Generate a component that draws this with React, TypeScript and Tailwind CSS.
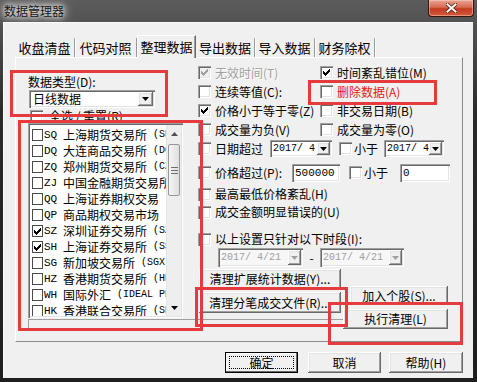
import React from 'react';

const sunken =
  'shadow-[inset_1px_1px_0_#a0a0a0,inset_2px_2px_0_#696969,inset_-1px_-1px_0_#ffffff,inset_-2px_-2px_0_#e3e3e3]';
const raised =
  'shadow-[inset_-1px_-1px_0_#696969,inset_1px_1px_0_#ffffff,inset_-2px_-2px_0_#a0a0a0,inset_2px_2px_0_#e3e3e3]';

// classic 7x7 pixel check mark
function Tick({ color = '#000' }: { color?: string }) {
  return (
    <svg width="7" height="7" viewBox="0 0 7 7" shapeRendering="crispEdges">
      {[2, 3, 4, 3, 2, 1, 0].map((y, x) => (
        <rect key={x} x={x} y={y} width="1" height="3" fill={color} />
      ))}
    </svg>
  );
}

function Check({ on = false, disabled = false }: { on?: boolean; disabled?: boolean }) {
  return (
    <span
      className={`w-[13px] h-[13px] shrink-0 flex items-center justify-center ${
        disabled ? 'bg-[#f0f0f0]' : 'bg-white'
      } ${sunken}`}
    >
      {on && <Tick color={disabled ? '#a0a0a0' : '#000'} />}
    </span>
  );
}

function Arrow({ disabled = false }: { disabled?: boolean }) {
  return (
    <svg width="7" height="4" viewBox="0 0 7 4">
      <path d="M0 0H7L3.5 4Z" fill={disabled ? '#a0a0a0' : '#000'} />
    </svg>
  );
}

function DropBtn({ disabled = false, narrow = false }: { disabled?: boolean; narrow?: boolean }) {
  return (
    <span
      className={`${narrow ? 'w-[13px]' : 'w-[15px]'} self-stretch shrink-0 flex items-center justify-center bg-[#f0f0f0] ${raised}`}
    >
      <Arrow disabled={disabled} />
    </span>
  );
}

function Combo({ text, w, disabled = false, mono = false }: { text: string; w: string; disabled?: boolean; mono?: boolean }) {
  return (
    <div className={`${w} h-full flex p-[2px] ${disabled ? 'bg-[#f7f7f7] text-[#a0a0a0]' : 'bg-white'} ${sunken}`}>
      <span
        className={`flex-1 flex items-center whitespace-pre ${
          mono ? "pl-[1px] font-['Liberation_Mono',monospace] text-[10px]" : 'pl-[2px]'
        }`}
      >
        {text}
      </span>
      <DropBtn disabled={disabled} narrow={mono} />
    </div>
  );
}

function Opt({ on = false, disabled = false, red = false, children }: { on?: boolean; disabled?: boolean; red?: boolean; children: React.ReactNode }) {
  return (
    <div className="flex items-center whitespace-nowrap">
      <Check on={on} disabled={disabled} />
      <span
        className={`ml-[4px] ${
          disabled ? 'text-[#a0a0a0] [text-shadow:1px_1px_0_#ffffff]' : red ? 'text-[#e01818]' : 'text-black'
        }`}
      >
        {children}
      </span>
    </div>
  );
}

function Btn({ children, className = '' }: { children: React.ReactNode; className?: string }) {
  return (
    <div className={`flex items-center justify-center bg-[#f0f0f0] whitespace-nowrap ${raised} ${className}`}>
      {children}
    </div>
  );
}

const markets = [
  { code: 'SQ', name: '上海期货交易所', tail: ' (SHFE)' },
  { code: 'DQ', name: '大连商品交易所', tail: ' (DCE)' },
  { code: 'ZQ', name: '郑州期货交易所', tail: ' (CZCE)' },
  { code: 'ZJ', name: '中国金融期货交易所', tail: ' (CFFEX)' },
  { code: 'QQ', name: '上海证券期权交易', tail: ' (SSE)' },
  { code: 'QP', name: '商品期权交易市场', tail: '' },
  { code: 'SZ', name: '深圳证券交易所', tail: ' (SZSE)', on: true },
  { code: 'SH', name: '上海证券交易所', tail: ' (SSE)', on: true },
  { code: 'SG', name: '新加坡交易所', tail: ' (SGX)' },
  { code: 'HZ', name: '香港期货交易所', tail: ' (HKFE)' },
  { code: 'WH', name: '国际外汇', tail: ' (IDEAL PRO)' },
  { code: 'HK', name: '香港联合交易所', tail: ' (SEHK)' },
];

const tabs = ['收盘清盘', '代码对照', '整理数据', '导出数据', '导入数据', '财务除权'];
const tabWidths = ['w-[60px]', 'w-[62px]', 'w-[59px]', 'w-[59px]', 'w-[60px]', 'w-[60px]'];

export default function App() {
  return (
    <div className="relative w-[477px] h-[382px] overflow-hidden flex flex-col bg-[linear-gradient(180deg,#5c5c5c_0%,#2a2a2a_30%,#1e1e1e_100%)] font-['Noto_Sans_CJK_SC',sans-serif] text-[12px] leading-[14px] text-black">
      {/* title bar */}
      <div className="h-[22px] shrink-0 flex justify-between items-start">
        <span className="pl-[4px] pt-[3px] text-[12px] leading-[15px] text-[#151515] [text-shadow:0_0_5px_#ffffff,0_0_9px_#ffffff,0_0_14px_#e0e0e0]">
          数据管理器
        </span>
        <div className="mr-[3px] w-[46px] h-[17px] rounded-b-[4px] border border-t-0 border-[#3d1209] bg-[linear-gradient(180deg,#e9a595_0%,#d86a52_45%,#c33a20_55%,#d45a3e_100%)] shadow-[inset_0_0_0_1px_rgba(255,220,210,0.45)] flex items-center justify-center">
          <svg width="11" height="10" viewBox="0 0 11 10">
            <path d="M1.5 1.5L9.5 8.5M9.5 1.5L1.5 8.5" stroke="#4a1a10" strokeWidth="3.6" strokeLinecap="square" />
            <path d="M1.5 1.5L9.5 8.5M9.5 1.5L1.5 8.5" stroke="#ffffff" strokeWidth="2" strokeLinecap="square" />
          </svg>
        </div>
      </div>

      {/* client area */}
      <div className="ml-[3px] mr-[4px] mb-[4px] flex-1 flex flex-col bg-[#f0f0f0] border-t border-l border-[#fbfbfb] pt-[12px]">
        {/* tab strip */}
        <div className="ml-[11px] h-[22px] flex items-end text-[13px] leading-[15px]">
          {tabs.map((t, i) =>
            i === 2 ? (
              <div
                key={t}
                className={`${tabWidths[i]} relative z-10 h-[23px] -mb-[1px] bg-[#f0f0f0] border-t border-l border-white border-r border-r-[#696969] shadow-[inset_-1px_0_0_#a0a0a0] flex justify-center pt-[3px]`}
              >
                {t}
              </div>
            ) : (
              <div
                key={t}
                className={`${tabWidths[i]} h-[19px] flex items-start justify-center pt-[2px] border-r border-[#9a9a9a] shadow-[1px_0_0_#ffffff]`}
              >
                {t}
              </div>
            )
          )}
        </div>

        {/* tab panel */}
        <div className="ml-[11px] w-[448px] h-[285px] shrink-0 border-t border-l border-white border-r border-b border-r-[#8a8a8a] border-b-[#8a8a8a] flex">
          {/* left column */}
          <div className="w-[182px] shrink-0 pl-[12px] pt-[17px] flex flex-col">
            <div className="h-[14px]">数据类型(D):</div>
            <div className="mt-[1px] ml-[1px] h-[18px]">
              <Combo text="日线数据" w="w-[126px]" />
            </div>
            <div className="mt-[1px] h-[14px] flex items-center pl-[2px]">
              <Check />
              <span className="ml-[6px]">全选 / 重置(R)</span>
            </div>
            <div className={`w-[155px] h-[195px] bg-white flex p-[2px] ${sunken}`}>
              <div className="flex-1 overflow-hidden pt-[2px] pl-[2px]">
                {markets.map((m) => (
                  <div key={m.code} className="h-[16px] flex items-center whitespace-nowrap">
                    <span className="w-[11px] h-[12px] shrink-0 border border-[#4a4a4a] bg-white flex items-center justify-center">
                      {m.on && <Tick />}
                    </span>
                    <span className="ml-[1px] w-[19px] shrink-0 font-['Liberation_Mono',monospace] text-[11px]">{m.code}</span>
                    <span>{m.name}</span>
                    <span className="font-['Liberation_Mono',monospace] text-[10px] whitespace-pre">{m.tail}</span>
                  </div>
                ))}
              </div>
              <div className="w-[15px] shrink-0 flex flex-col bg-[#eeeeee] border-l border-[#e4e4e4]">
                <div className="h-[17px] flex items-center justify-center">
                  <svg width="7" height="4" viewBox="0 0 7 4">
                    <path d="M0 4H7L3.5 0Z" fill="#505050" />
                  </svg>
                </div>
                <div className="flex-1 px-[1px]">
                  <div className="mt-[2px] h-[52px] rounded-[2px] border border-[#979797] bg-[linear-gradient(90deg,#f5f5f5,#dedede)] flex flex-col items-center justify-center gap-[2px]">
                    <span className="w-[7px] h-px bg-[#6e6e6e]" />
                    <span className="w-[7px] h-px bg-[#6e6e6e]" />
                    <span className="w-[7px] h-px bg-[#6e6e6e]" />
                  </div>
                </div>
                <div className="h-[17px] flex items-center justify-center">
                  <Arrow />
                </div>
              </div>
            </div>
            <div className="mt-[1px] w-[315px] h-[12px] shrink-0 border-t border-l border-[#a0a0a0]" />
          </div>

          {/* right column */}
          <div className="flex-1 pt-[5px] flex flex-col">
            <div className="h-[19px] flex items-center">
              <div className="w-[122px]">
                <Opt on disabled>无效时间(T)</Opt>
              </div>
              <Opt on>时间紊乱错位(M)</Opt>
            </div>
            <div className="h-[19px] flex items-center">
              <div className="w-[122px]">
                <Opt>连续等值(C):</Opt>
              </div>
              <Opt red>删除数据(A)</Opt>
            </div>
            <div className="h-[19px] flex items-center">
              <div className="w-[122px]">
                <Opt on>价格小于等于零(Z)</Opt>
              </div>
              <Opt>非交易日期(B)</Opt>
            </div>
            <div className="h-[19px] flex items-center">
              <div className="w-[122px]">
                <Opt>成交量为负(V)</Opt>
              </div>
              <Opt>成交量为零(O)</Opt>
            </div>
            <div className="h-[19px] flex items-center">
              <Check />
              <span className="ml-[4px] w-[55px]">日期超过</span>
              <div className="h-[17px]">
                <Combo text="2017/ 4" w="w-[62px]" mono />
              </div>
              <div className="ml-[7px]">
                <Check />
              </div>
              <span className="ml-[2px] w-[30px]">小于</span>
              <div className="h-[17px]">
                <Combo text="2017/ 4" w="w-[60px]" mono />
              </div>
            </div>
            <div className="mt-[5px] h-[19px] flex items-center">
              <Check />
              <span className="ml-[4px] w-[77px]">价格超过(P):</span>
              <div className={`w-[48px] h-[18px] bg-white pl-[3px] flex items-center font-['Liberation_Mono',monospace] text-[11px] ${sunken}`}>
                500000
              </div>
              <div className="ml-[9px]">
                <Check />
              </div>
              <span className="ml-[2px] w-[36px]">小于</span>
              <div className={`w-[50px] h-[18px] bg-white pl-[3px] flex items-center font-['Liberation_Mono',monospace] text-[11px] ${sunken}`}>
                0
              </div>
            </div>
            <div className="mt-[3px] h-[18px] flex items-center">
              <Opt>最高最低价格紊乱(H)</Opt>
            </div>
            <div className="h-[18px] flex items-center">
              <Opt>成交金额明显错误的(U)</Opt>
            </div>
            <div className="mt-[9px] h-[18px] flex items-center">
              <Opt>以上设置只针对以下时段(I):</Opt>
            </div>
            <div className="h-[19px] pl-[20px] flex items-center">
              <div className="h-[19px]">
                <Combo text="2017/ 4/21" w="w-[85px]" disabled mono />
              </div>
              <span className="w-[17px] text-center">-</span>
              <div className="h-[19px]">
                <Combo text="2017/ 4/21" w="w-[84px]" disabled mono />
              </div>
            </div>
            <div className="mt-[2px] flex">
              <div className="flex flex-col pl-[1px]">
                <Btn className="w-[142px] h-[20px]">清理扩展统计数据(Y)...</Btn>
                <Btn className="mt-[3px] w-[142px] h-[21px]">清理分笔成交文件(R)...</Btn>
              </div>
              <div className="ml-[2px] flex flex-col items-end">
                <Btn className="mt-[17px] w-[98px] h-[19px]">加入个股(S)...</Btn>
                <Btn className="mt-[4px] w-[105px] h-[20px]">执行清理(L)</Btn>
              </div>
            </div>
          </div>
        </div>

        {/* dialog buttons */}
        <div className="mt-[10px] pr-[10px] flex justify-end">
          <div className="w-[73px] h-[21px] mr-[10px] border border-black bg-[#f0f0f0] p-[3px] flex shadow-[inset_-1px_-1px_0_#696969,inset_1px_1px_0_#ffffff]">
            <div className="flex-1 border border-dotted border-black flex items-center justify-center">确定</div>
          </div>
          <Btn className="w-[73px] h-[21px] mr-[8px]">取消</Btn>
          <Btn className="w-[74px] h-[21px]">帮助(H)</Btn>
        </div>
      </div>

      {/* red annotation boxes */}
      <div className="absolute left-[10px] top-[70px] w-[158px] h-[47px] border-[3px] border-[#e53b3f] pointer-events-none" />
      <div className="absolute left-[18px] top-[120px] w-[185px] h-[211px] border-[3px] border-[#e53b3f] pointer-events-none" />
      <div className="absolute left-[308px] top-[80px] w-[129px] h-[25px] border-[3px] border-[#e53b3f] pointer-events-none" />
      <div className="absolute left-[195px] top-[287px] w-[153px] h-[40px] border-[3px] border-[#e53b3f] pointer-events-none" />
      <div className="absolute left-[328px] top-[302px] w-[135px] h-[43px] border-[3px] border-[#e53b3f] pointer-events-none" />
    </div>
  );
}
